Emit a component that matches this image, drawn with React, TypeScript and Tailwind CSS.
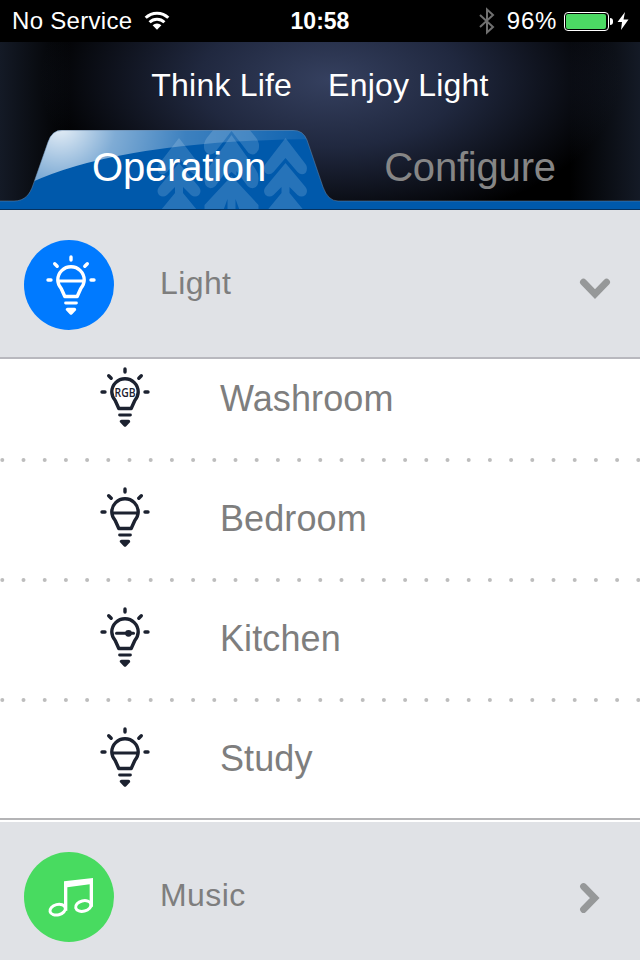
import type { ReactNode } from 'react';

type BulbKind = 'plain' | 'rgb' | 'dimmer';

const rooms: { name: string; kind: BulbKind }[] = [
  { name: 'Washroom', kind: 'rgb' },
  { name: 'Bedroom', kind: 'plain' },
  { name: 'Kitchen', kind: 'dimmer' },
  { name: 'Study', kind: 'plain' },
];

function BulbIcon({ kind = 'plain', className = '' }: { kind?: BulbKind; className?: string }) {
  return (
    <svg
      viewBox="0 0 50 60"
      className={`h-[60px] w-[50px] shrink-0 ${className}`}
      fill="none"
      stroke="currentColor"
      strokeWidth="3.4"
      strokeLinecap="round"
      strokeLinejoin="round"
    >
      <path d="M25 2v3M2 25h3M45 25h3M8.7 8.7l2.5 2.5M41.3 8.7L38.8 11.2" />
      <path d="M18.8 41.5L15.2 33.5C12.8 30.5 11.8 28.500 11.8 25A13.2 13.2 0 0 1 38.2 25C38.2 28.5 37.2 30.5 34.800 33.5L31.2 41.5Z" />
      {kind === 'plain' && <path d="M12.5 26h25" strokeWidth="3" />}
      {kind === 'dimmer' && (
        <>
          <path d="M16.5 26.300h17" strokeWidth="3" />
          <circle cx="28.5" cy="26.300" r="3.4" fill="currentColor" stroke="none" />
        </>
      )}
      {kind === 'rgb' && (
        <text
          x="25"
          y="29.5"
          textAnchor="middle"
          fontSize="12.5"
          fontWeight="600"
          fill="currentColor"
          stroke="none"
          textLength="21"
          lengthAdjust="spacingAndGlyphs"
          className="font-['Open_Sans',sans-serif]"
        >
          RGB
        </text>
      )}
      <path d="M19.6 48h10.8" strokeWidth="2.9" />
      <path d="M21.5 54.4h7L25 58Z" fill="currentColor" strokeWidth="3.4" />
    </svg>
  );
}

function MusicIcon() {
  return (
    <svg viewBox="0 0 270 270" className="size-[90px]" fill="none" stroke="white" strokeWidth="9">
      <path d="M120 88L207 78V164H197V97L130 106V176H120Z" fill="white" stroke="none" />
      <ellipse cx="101" cy="173" rx="23.5" ry="15.5" transform="rotate(-14 101 173)" />
      <ellipse cx="178" cy="162" rx="23.5" ry="15.5" transform="rotate(-14 178 162)" />
    </svg>
  );
}

function StatusBar() {
  return (
    <div className="grid h-[42px] shrink-0 grid-cols-3 items-center bg-black px-3 text-[23px] text-white">
      <div className="flex items-center gap-3">
        <span className="text-[24px] tracking-[0.3px] whitespace-nowrap">No Service</span>
        <svg viewBox="0 0 26 20" className="h-5 w-[26px] shrink-0" fill="none" stroke="white" strokeWidth="3">
          <path d="M1.7 6.8a16 16 0 0 1 22.6 0M5.6 11.2a10.6 10.6 0 0 1 14.8 0" />
          <path d="M13 18.8l-4.4-4.5a6.4 6.4 0 0 1 8.8 0Z" fill="white" stroke="none" />
        </svg>
      </div>
      <span className="text-center font-bold">10:58</span>
      <div className="-mr-px flex items-center justify-end">
        <svg viewBox="0 0 16 28" className="mr-3 h-7 w-4 shrink-0" fill="none" stroke="#707070" strokeWidth="2">
          <path d="M1 8l13 12-6 5.5V2.5l6 5.5L1 20" />
        </svg>
        <span className="mr-[7px] text-[24px] tracking-[0.7px]">96%</span>
        <div className="flex h-[19px] w-[45px] shrink-0 rounded-[4px] border border-white p-px">
          <div className="w-10 rounded-[2px] bg-[#4cd964]" />
        </div>
        <div className="ml-px h-[7px] w-[3px] rounded-r-full bg-white" />
        <svg viewBox="0 0 12 18" className="ml-1 h-[18px] w-3" fill="white">
          <path d="M8 0L0.5 10H5L4 18L11.5 7.5H6.5Z" />
        </svg>
      </div>
    </div>
  );
}

function TabBackground() {
  return (
    <svg viewBox="0 130 640 80" className="absolute bottom-0 left-0 h-20 w-[640px]">
      <defs>
        <radialGradient id="gloss" gradientUnits="userSpaceOnUse" cx="60" cy="124" r="280">
          <stop offset="0" stopColor="#fff" stopOpacity="0.92" />
          <stop offset="0.2" stopColor="#fff" stopOpacity="0.5" />
          <stop offset="0.45" stopColor="#fff" stopOpacity="0.24" />
          <stop offset="1" stopColor="#fff" stopOpacity="0.02" />
        </radialGradient>
        <clipPath id="tab">
          <path d="M0 201H14C25 201 30 194 33 185L48 142Q52 130 62 130H293Q303 130 307 140L323 187Q328 201 338 201H640V210H0Z" />
        </clipPath>
        <g id="tree">
          <path d="M0 138L20 164Q23 168 20 173Q16 176 12 172L0 158L-12 172Q-16 176 -20 173Q-23 168 -20 164Z" />
          <path d="M0 163L20 187Q23 191 20 195Q16 198 12 195L4 187V193L18 210H-18L-4 193V187L-12 195Q-16 198 -20 195Q-23 191 -20 187Z" />
        </g>
      </defs>
      <g clipPath="url(#tab)">
        <rect y="130" width="640" height="80" fill="#0059ab" />
        <g fill="#2673b9">
          <use href="#tree" x="179" />
          <use href="#tree" x="285.5" />
          <g transform="translate(231.5 0)">
            <path d="M0 108L24 137Q29 143 27 150Q23 157 17 153L0 131L-17 153Q-23 157 -27 150Q-29 143 -24 137Z" />
            <path d="M0 135L24 169Q29 176 26 185Q22 191 16 186L5 171V176L0 172L-5 176V171L-16 186Q-22 191 -26 185Q-29 176 -24 169Z" />
            <path d="M0 176L27 205V210H8L4 199V210H-4V199L-8 210H-27V205Z" />
          </g>
        </g>
        <path d="M20 188Q110 141 315 139V125H20Z" fill="url(#gloss)" />
      </g>
      <path
        d="M0 201H14C25 201 30 194 33 185L48 142Q52 130 62 130.5H293Q303 130 307 140L323 187Q328 201 338 201H640"
        fill="none"
        stroke="#6d87a5"
        strokeOpacity="0.5"
      />
      <path d="M0 209.5H640" stroke="#06325f" />
    </svg>
  );
}

function Header() {
  return (
    <header className="relative h-[168px] shrink-0 bg-black bg-[radial-gradient(ellipse_290px_150px_at_330px_38px,#35405f,#20283f_45%,transparent),linear-gradient(90deg,#141a26,transparent_11%,transparent_89%,#141a26)] text-white">
      <TabBackground />
      <h1 className="relative flex h-[86px] items-center justify-center gap-9 text-[32px] tracking-[0.2px]">
        <span>Think Life</span>
        <span>Enjoy Light</span>
      </h1>
      <nav className="relative mt-0.5 flex text-[40px] tracking-[-0.2px]">
        <button className="h-[74px] w-[358px]">Operation</button>
        <button className="h-[74px] w-[224px] text-[#868686]">Configure</button>
      </nav>
    </header>
  );
}

function Section({ title, icon, open }: { title: string; icon: ReactNode; open?: boolean }) {
  return (
    <div className="flex h-[147px] shrink-0 items-center bg-[#e0e2e6] px-6 pt-[3px]">
      {icon}
      <span className="-mt-[5px] ml-[46px] flex-1 text-[32px] tracking-[0.4px] text-[#7e7e7e]">{title}</span>
      <svg viewBox="0 0 40 40" className="size-10" fill="none" stroke="#969899" strokeWidth="6.8" strokeLinecap="round">
        {open ? <path d="M7.4 17.2L19 29.2L30.6 17.2" /> : <path d="M7.5 9.5L18.8 21L7.5 32.5" />}
      </svg>
    </div>
  );
}

export default function App() {
  return (
    <div className="flex h-[960px] w-[640px] flex-col overflow-hidden bg-white font-['Liberation_Sans',Arial,sans-serif]">
      <StatusBar />
      <Header />
      <Section
        title="Light"
        open
        icon={
          <div className="flex size-[90px] items-center justify-center rounded-full bg-[#007aff] pl-[3px] text-white">
            <BulbIcon />
          </div>
        }
      />
      <div className="h-[461px] shrink-0 overflow-hidden border-t-2 border-[#b8b8be]">
        <ul className="-mt-[17px]">
          {rooms.map((room) => (
            <li key={room.name} className="flex h-[120px] flex-col">
              <div className="flex flex-1 items-center pb-1.5 pl-[100px] text-[36px] text-[#7e7e7e]">
                <BulbIcon kind={room.kind} className="text-[#1c2230]" />
                <span className="mt-[3px] ml-[70px] tracking-[0.1px]">{room.name}</span>
              </div>
              <svg className="h-1 w-full" viewBox="0 0 640 4">
                <path d="M2.3 2H640" stroke="#bdbdbd" strokeWidth="4" strokeLinecap="round" strokeDasharray="0 21.2" />
              </svg>
            </li>
          ))}
        </ul>
      </div>
      <div className="h-1 shrink-0 border-t-2 border-[#b4b4b6]" />
      <Section
        title="Music"
        icon={
          <div className="size-[90px] rounded-full bg-[#48db60]">
            <MusicIcon />
          </div>
        }
      />
    </div>
  );
}
